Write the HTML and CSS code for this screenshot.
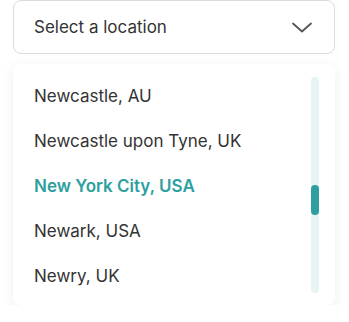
FILE: index.html
```html
<!DOCTYPE html>
<html>
<head>
<meta charset="utf-8">
<link rel="stylesheet" href="styles.css">
</head>
<body>
<div class="wrap">
  <div class="select">
    <span class="placeholder">Select a location</span>
    <svg class="chevron" width="20" height="11" viewBox="0 0 20 11"><path d="M1 1.5 L10 9.5 L19 1.5" fill="none" stroke="#555" stroke-width="1.8" stroke-linecap="round" stroke-linejoin="round"/></svg>
  </div>
  <div class="panel">
    <ul class="list">
      <li class="item">Newcastle, AU</li>
      <li class="item">Newcastle upon Tyne, UK</li>
      <li class="item active">New York City, USA</li>
      <li class="item">Newark, USA</li>
      <li class="item">Newry, UK</li>
    </ul>
    <div class="track"><div class="thumb"></div></div>
  </div>
</div>
</body>
</html>
```
FILE: styles.css
```css
html, body { margin: 0; padding: 0; background: #fff; }
body { font-family: Inter, "Noto Sans", sans-serif; }
.wrap { padding: 0 14px 0 13px; display: flex; flex-direction: column; gap: 10px; }
.select {
  box-sizing: border-box;
  height: 54px;
  border: 1px solid #dcdcdc;
  border-radius: 8px;
  display: flex;
  align-items: center;
  justify-content: space-between;
  padding: 0 22px 0 20px;
}
.placeholder { font-size: 17px; color: #333; }
.chevron { display: block; }
.panel {
  height: 241px;
  box-sizing: border-box;
  border-radius: 8px;
  background: #fff;
  box-shadow: 0 3px 14px rgba(0,0,0,0.07);
  display: flex;
  justify-content: space-between;
  padding: 13px 16px 12px 21px;
}
.list { list-style: none; margin: 0; padding: 0; margin-top: -4px; }
.item {
  height: 45px;
  display: flex;
  align-items: center;
  font-size: 17px;
  color: #333;
}
.item.active { color: #2e9fa0; font-weight: 600; }
.track {
  width: 8px;
  background: #e7f4f4;
  border-radius: 4px;
  padding-top: 108px;
  box-sizing: border-box;
}
.thumb { height: 30px; background: #2e9fa0; border-radius: 4px; }
```
